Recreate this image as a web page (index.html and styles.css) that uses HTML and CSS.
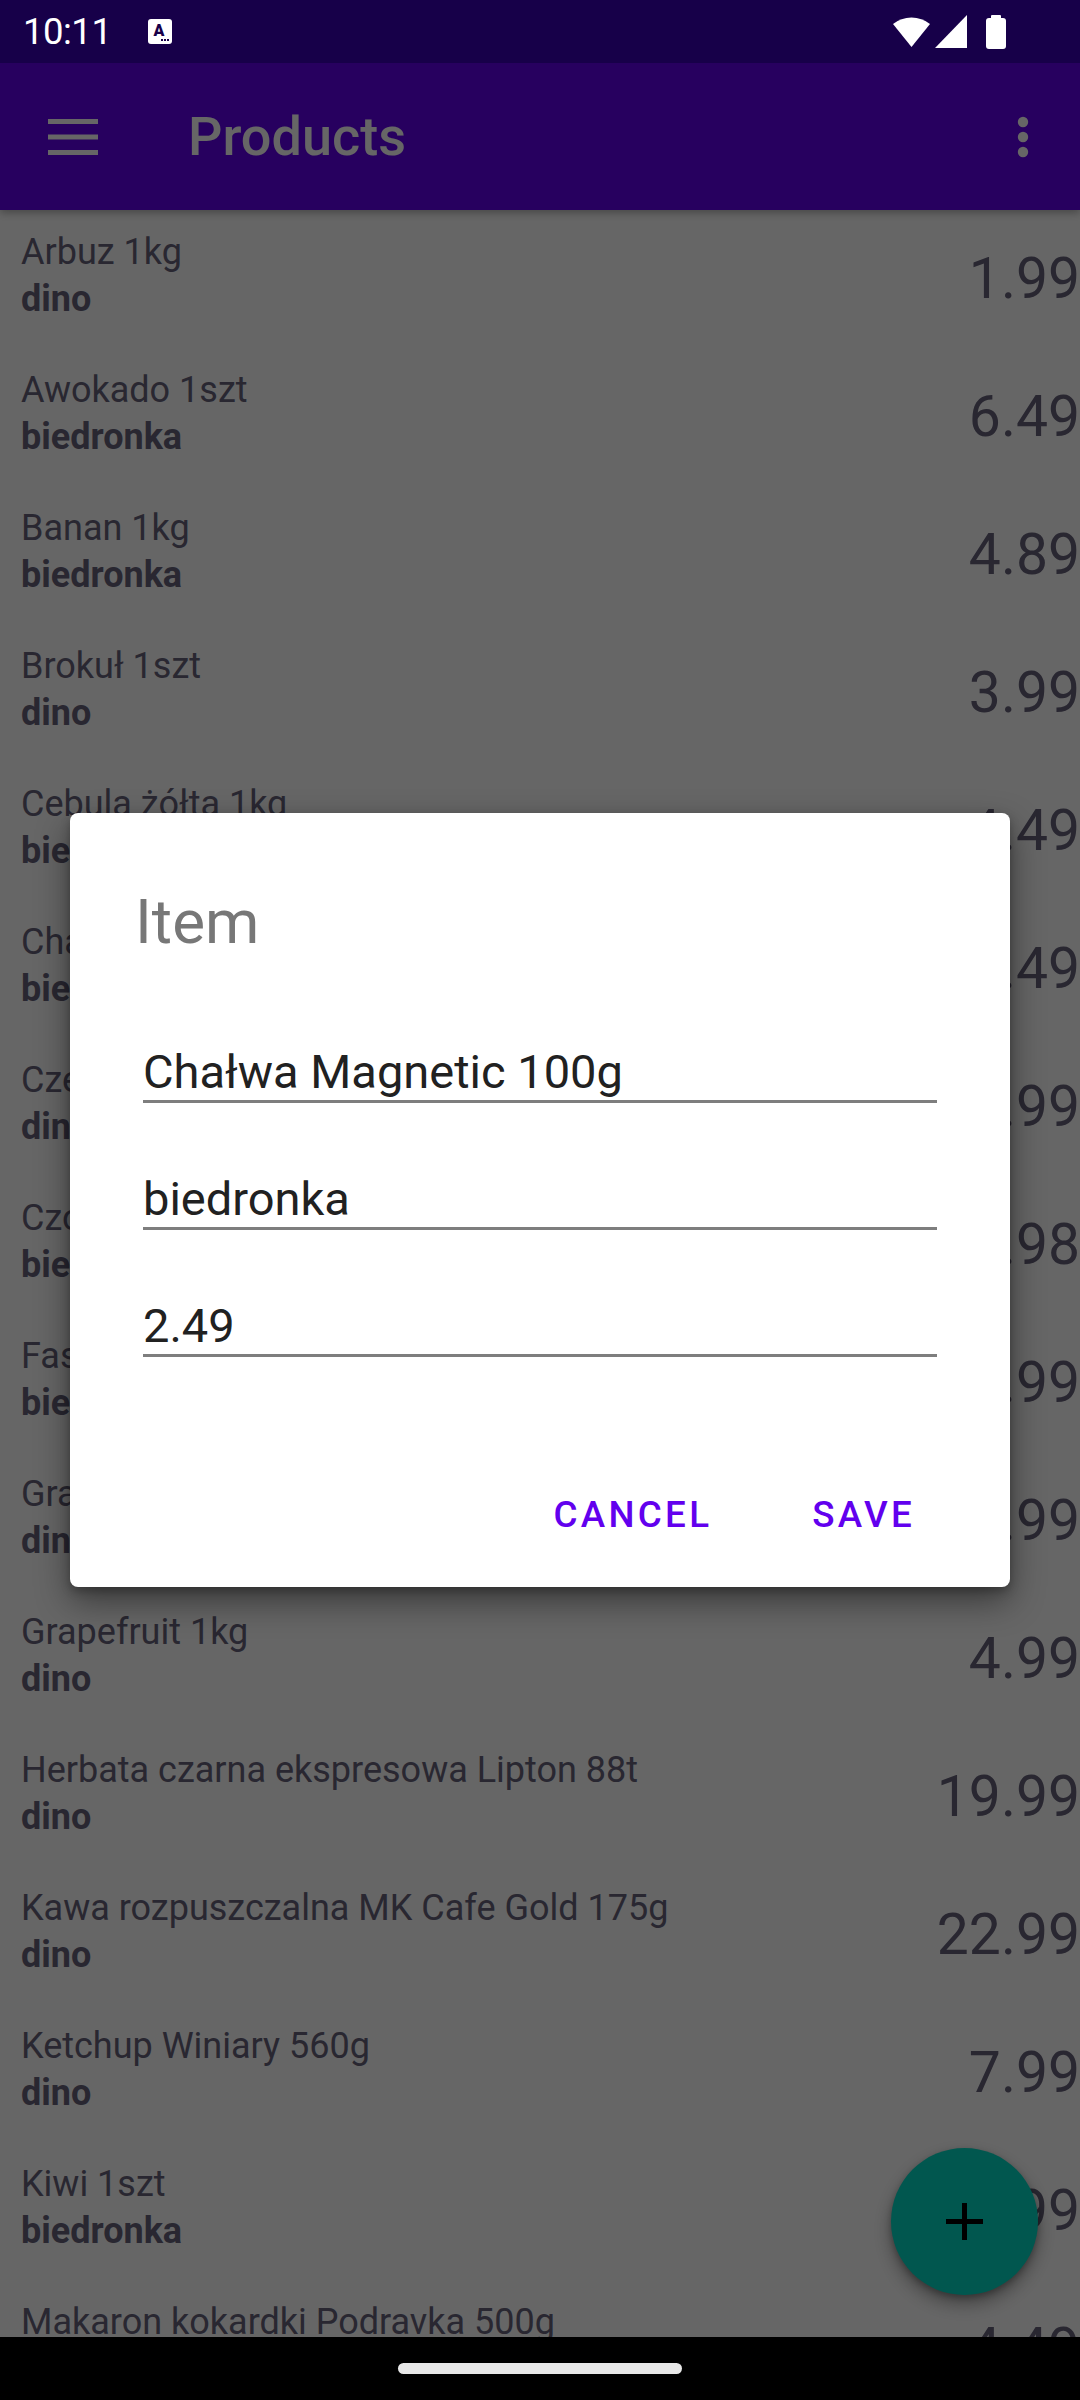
FILE: index.html
```html
<!DOCTYPE html>
<html lang="pl">
<head>
<meta charset="utf-8">
<title>Products</title>
<link rel="stylesheet" href="styles.css">
</head>
<body>
<div class="screen">
  <div class="status-bar">
    <div class="status-left">
      <span class="clock">10:11</span>
      <svg class="notif" width="24" height="25" viewBox="0 0 24 25">
        <rect x="0" y="0" width="24" height="25" rx="3" fill="#ffffff"/>
        <text x="11" y="17" text-anchor="middle" class="notif-letter">A</text>
        <rect x="13" y="20" width="2" height="2" fill="#170049"/>
        <rect x="16" y="20" width="2" height="2" fill="#170049"/>
        <rect x="19" y="20" width="2" height="2" fill="#170049"/>
      </svg>
    </div>
    <div class="status-right">
      <svg class="wifi" width="40" height="34" viewBox="0 0 40 34">
        <path d="M19.5 33 L1 10 A29.5 29.5 0 0 1 38 10 Z" fill="#ffffff"/>
      </svg>
      <svg class="signal" width="33" height="33" viewBox="0 0 33 33">
        <path d="M32 0 L32 33 L0 33 Z" fill="#ffffff"/>
      </svg>
      <svg class="battery" width="20" height="34" viewBox="0 0 20 34">
        <rect x="5" y="0" width="10" height="4" rx="1" fill="#ffffff"/>
        <rect x="0" y="3" width="20" height="31" rx="3" fill="#ffffff"/>
      </svg>
    </div>
  </div>

  <header class="app-bar">
    <svg class="hamburger" width="50" height="36" viewBox="0 0 50 36">
      <rect x="0" y="0" width="50" height="5" fill="#ffffff"/>
      <rect x="0" y="15.5" width="50" height="5" fill="#ffffff"/>
      <rect x="0" y="31" width="50" height="5" fill="#ffffff"/>
    </svg>
    <h1 class="app-title">Products</h1>
    <svg class="more" width="12" height="42" viewBox="0 0 12 42">
      <circle cx="6" cy="6" r="5.2" fill="#ffffff"/>
      <circle cx="6" cy="21" r="5.2" fill="#ffffff"/>
      <circle cx="6" cy="36" r="5.2" fill="#ffffff"/>
    </svg>
  </header>

  <main class="list">
    <div class="row"><div class="info"><div class="name">Arbuz 1kg</div><div class="store">dino</div></div><div class="price">1.99</div></div>
    <div class="row"><div class="info"><div class="name">Awokado 1szt</div><div class="store">biedronka</div></div><div class="price">6.49</div></div>
    <div class="row"><div class="info"><div class="name">Banan 1kg</div><div class="store">biedronka</div></div><div class="price">4.89</div></div>
    <div class="row"><div class="info"><div class="name">Brokuł 1szt</div><div class="store">dino</div></div><div class="price">3.99</div></div>
    <div class="row"><div class="info"><div class="name">Cebula żółta 1kg</div><div class="store">biedronka</div></div><div class="price">4.49</div></div>
    <div class="row"><div class="info"><div class="name">Chałwa Magnetic 100g</div><div class="store">biedronka</div></div><div class="price">2.49</div></div>
    <div class="row"><div class="info"><div class="name">Czekolada mleczna 100g</div><div class="store">dino</div></div><div class="price">3.99</div></div>
    <div class="row"><div class="info"><div class="name">Czosnek 1szt</div><div class="store">biedronka</div></div><div class="price">1.98</div></div>
    <div class="row"><div class="info"><div class="name">Fasola czerwona 400g</div><div class="store">biedronka</div></div><div class="price">3.99</div></div>
    <div class="row"><div class="info"><div class="name">Granat 1szt</div><div class="store">dino</div></div><div class="price">5.99</div></div>
    <div class="row"><div class="info"><div class="name">Grapefruit 1kg</div><div class="store">dino</div></div><div class="price">4.99</div></div>
    <div class="row"><div class="info"><div class="name">Herbata czarna ekspresowa Lipton 88t</div><div class="store">dino</div></div><div class="price">19.99</div></div>
    <div class="row"><div class="info"><div class="name">Kawa rozpuszczalna MK Cafe Gold 175g</div><div class="store">dino</div></div><div class="price">22.99</div></div>
    <div class="row"><div class="info"><div class="name">Ketchup Winiary 560g</div><div class="store">dino</div></div><div class="price">7.99</div></div>
    <div class="row"><div class="info"><div class="name">Kiwi 1szt</div><div class="store">biedronka</div></div><div class="price">1.99</div></div>
    <div class="row"><div class="info"><div class="name">Makaron kokardki Podravka 500g</div><div class="store">biedronka</div></div><div class="price">4.49</div></div>
  </main>

  <button class="fab" aria-label="Add">
    <svg width="37" height="37" viewBox="0 0 37 37">
      <rect x="16" y="0" width="5" height="37" fill="#000000"/>
      <rect x="0" y="16" width="37" height="5" fill="#000000"/>
    </svg>
  </button>

  <div class="scrim">
    <div class="dialog">
      <h2 class="dialog-title">Item</h2>
      <div class="fields">
        <div class="field">Chałwa Magnetic 100g</div>
        <div class="field">biedronka</div>
        <div class="field">2.49</div>
      </div>
      <div class="actions">
        <button class="action">Cancel</button>
        <button class="action">Save</button>
      </div>
    </div>
  </div>

  <div class="nav-bar"><div class="handle"></div></div>
</div>
</body>
</html>
```

FILE: styles.css
```css
* {
  box-sizing: border-box;
}

html, body {
  margin: 0;
  padding: 0;
  background: #000;
}

body {
  font-family: Roboto, "Noto Sans", "Liberation Sans", sans-serif;
}

.screen {
  position: relative;
  width: 1080px;
  height: 2400px;
  overflow: hidden;
  display: flex;
  flex-direction: column;
  background: #ffffff;
}

/* status bar (already dimmed, drawn above the scrim) */
.status-bar {
  position: relative;
  z-index: 3;
  flex: 0 0 63px;
  height: 63px;
  background: #170049;
  display: flex;
  align-items: center;
  justify-content: space-between;
  padding: 0 74px 0 23px;
  color: #ffffff;
}

.status-left {
  display: flex;
  align-items: center;
}

.clock {
  font-size: 36.5px;
  line-height: 40px;
  letter-spacing: -0.5px;
}

.notif {
  margin-left: 37px;
  display: block;
}

.notif-letter {
  font-family: Roboto, sans-serif;
  font-weight: 900;
  font-size: 16px;
  fill: #170049;
}

.status-right {
  display: flex;
  align-items: flex-start;
  height: 35px;
}

.wifi {
  display: block;
}

.signal {
  display: block;
  margin-left: 3px;
  margin-top: 1px;
}

.battery {
  display: block;
  margin-left: 18px;
  margin-top: 1px;
}

/* app bar */
.app-bar {
  flex: 0 0 147px;
  height: 147px;
  background: #6200ee;
  display: flex;
  align-items: center;
  padding: 0 51px 0 48px;
  box-shadow: 0 3px 8px rgba(0, 0, 0, 0.3);
  position: relative;
  z-index: 1;
}

.hamburger {
  display: block;
}

.app-title {
  margin: 0 0 0 90px;
  flex: 1;
  font-size: 54px;
  font-weight: 500;
  line-height: 62px;
  color: #ffffff;
}

.more {
  display: block;
}

/* list */
.list {
  flex: 1 1 auto;
  overflow: hidden;
  background: #ffffff;
}

.row {
  height: 138px;
  display: flex;
  justify-content: space-between;
  padding-left: 21px;
}

.info {
  padding-top: 19px;
}

.name,
.store {
  font-size: 36px;
  line-height: 47px;
  color: #66627a;
  white-space: nowrap;
}

.store {
  font-weight: 700;
}

.price {
  align-self: center;
  font-size: 57px;
  line-height: 66px;
  color: #66627a;
}

/* floating action button */
.fab {
  position: absolute;
  right: 42px;
  bottom: 105px;
  width: 147px;
  height: 147px;
  border: none;
  border-radius: 50%;
  background: #03dac5;
  display: flex;
  align-items: center;
  justify-content: center;
  padding: 0;
  box-shadow: 0 9px 18px rgba(0, 0, 0, 0.35), 0 3px 6px rgba(0, 0, 0, 0.25);
}

.fab svg {
  display: block;
}

/* modal scrim */
.scrim {
  position: absolute;
  inset: 0;
  z-index: 2;
  background: rgba(0, 0, 0, 0.6);
  display: flex;
  align-items: center;
  justify-content: center;
}

.dialog {
  width: 940px;
  background: #ffffff;
  border-radius: 8px;
  padding: 71.5px 63px 50.5px;
  box-shadow: 0 14px 34px rgba(0, 0, 0, 0.45), 0 4px 10px rgba(0, 0, 0, 0.25);
}

.dialog-title {
  margin: 0;
  font-size: 62px;
  font-weight: 400;
  line-height: 74px;
  color: #777777;
  padding-left: 2px;
}

.fields {
  margin: 85.5px 10px 0;
  display: flex;
  flex-direction: column;
  gap: 68px;
}

.field {
  font-size: 47px;
  line-height: 56px;
  color: #212121;
  border-bottom: 3px solid #7e7e7e;
  white-space: nowrap;
}

.actions {
  margin-top: 135.5px;
  display: flex;
  justify-content: flex-end;
  gap: 100px;
  padding-right: 32px;
}

.action {
  border: none;
  background: transparent;
  padding: 0;
  font-family: Roboto, "Noto Sans", sans-serif;
  font-size: 36.75px;
  font-weight: 500;
  line-height: 44px;
  letter-spacing: 0.0892em;
  text-transform: uppercase;
  color: #6200ee;
}

/* gesture navigation bar */
.nav-bar {
  position: relative;
  z-index: 3;
  flex: 0 0 63px;
  height: 63px;
  background: #000000;
  display: flex;
  justify-content: center;
  padding-top: 26px;
}

.handle {
  width: 284px;
  height: 11px;
  border-radius: 6px;
  background: #e8e8e8;
}
```
